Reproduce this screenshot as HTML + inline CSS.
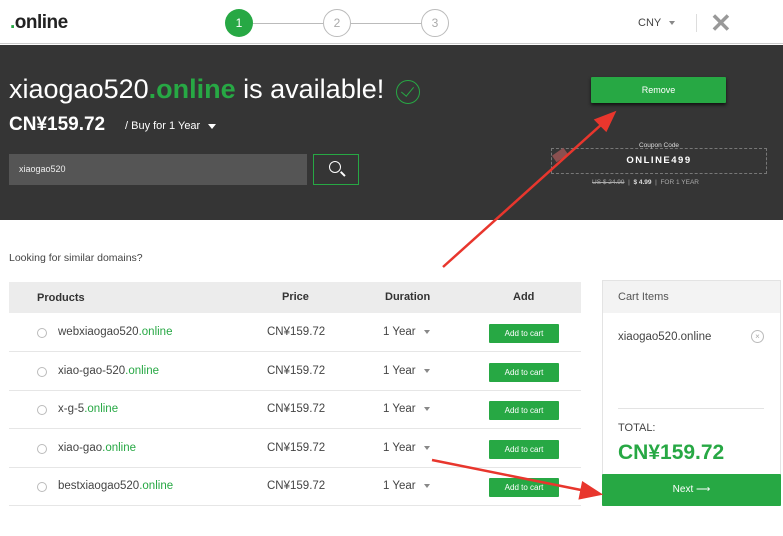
<!DOCTYPE html>
<html><head><meta charset="utf-8"><style>
*{margin:0;padding:0;box-sizing:border-box}
body{width:783px;height:536px;overflow:hidden;background:#fff;font-family:"Liberation Sans",sans-serif;position:relative;color:#333}
.a{position:absolute}
.g{color:#27a844}
.btn{background:#27a844;color:#fff;font-size:8px;text-align:center;border-radius:1px}
.row{position:absolute;left:9px;width:572px;height:38px;border-bottom:1px solid #e6e6e6;font-size:11.5px;color:#444}
.row>span{position:absolute;top:12px;white-space:nowrap}
.rad{position:absolute;left:28px;top:14px;width:10px;height:10px;border:1px solid #bbb;border-radius:50%}
.car{display:inline-block;border-left:3px solid transparent;border-right:3px solid transparent;border-top:4px solid #888;margin-left:8px;vertical-align:middle}
</style></head><body>
<div class="a" style="left:0;top:0;width:783px;height:44px;border-bottom:1px solid #ccc"></div>
<div class="a" style="left:10px;top:12px;font-size:19px;font-weight:bold;color:#222;letter-spacing:-0.5px"><span class="g">.</span>online</div>
<div class="a" style="left:253px;top:23px;width:70px;height:1px;background:#bbb"></div>
<div class="a" style="left:351px;top:23px;width:70px;height:1px;background:#bbb"></div>
<div class="a" style="left:225px;top:9px;width:28px;height:28px;border-radius:50%;background:#27a844;color:#fff;font-size:12px;text-align:center;line-height:28px">1</div>
<div class="a" style="left:323px;top:9px;width:28px;height:28px;border-radius:50%;border:1px solid #bbb;color:#aaa;font-size:12px;text-align:center;line-height:26px">2</div>
<div class="a" style="left:421px;top:9px;width:28px;height:28px;border-radius:50%;border:1px solid #bbb;color:#aaa;font-size:12px;text-align:center;line-height:26px">3</div>
<div class="a" style="left:638px;top:17px;font-size:11px;color:#444">CNY<span class="car"></span></div>
<div class="a" style="left:696px;top:14px;width:1px;height:18px;background:#ddd"></div>
<div class="a" style="left:710px;top:8px;font-size:26px;color:#999;font-weight:bold">✕</div>
<div class="a" style="left:0;top:45px;width:783px;height:175px;background:#353535"></div>
<div class="a" style="left:9px;top:74px;font-size:27px;color:#fff;white-space:nowrap">xiaogao520<span class="g" style="font-weight:bold">.online</span> is available!</div>
<div class="a" style="left:396px;top:80px;width:24px;height:24px;border:1.5px solid #27a844;border-radius:50%"></div>
<div class="a" style="left:404px;top:84px;width:7px;height:12px;border-right:1.5px solid #27a844;border-bottom:1.5px solid #27a844;transform:rotate(40deg)"></div>
<div class="a" style="left:9px;top:114px;font-size:19px;font-weight:bold;color:#fff">CN¥159.72</div>
<div class="a" style="left:125px;top:120px;font-size:11px;color:#fff">/ Buy for 1 Year <span style="display:inline-block;border-left:4px solid transparent;border-right:4px solid transparent;border-top:5px solid #fff;margin-left:5px;vertical-align:middle"></span></div>
<div class="a" style="left:9px;top:154px;width:298px;height:31px;background:#555;color:#eee;font-size:9px;padding:10px 10px">xiaogao520</div>
<div class="a" style="left:313px;top:154px;width:46px;height:31px;border:1.5px solid #27a844"></div>
<div class="a" style="left:329px;top:161px;width:12px;height:12px;border:1.5px solid #fff;border-radius:50%"></div>
<div class="a" style="left:340px;top:173px;width:6px;height:1.5px;background:#fff;transform:rotate(45deg)"></div>
<div class="a btn" style="left:591px;top:77px;width:135px;height:26px;line-height:26px;font-size:9px;box-shadow:0 2px 3px #111">Remove</div>
<div class="a" style="left:551px;top:148px;width:216px;height:26px;border:1px dashed #777"></div>
<div class="a" style="left:551px;top:142px;width:216px;text-align:center;font-size:6.5px;color:#ddd">Coupon Code</div>
<div class="a" style="left:551px;top:155px;width:216px;text-align:center;font-size:9.5px;color:#fff;letter-spacing:1.5px;font-weight:bold">ONLINE499</div>
<div class="a" style="left:553px;top:151px;width:14px;height:8px;background:#8a5050;transform:rotate(-35deg)"></div>
<div class="a" style="left:592px;top:179px;font-size:6.5px;color:#aaa"><s>US $ 24.99</s> &nbsp;|&nbsp; <b style="color:#ddd">$ 4.99</b> &nbsp;|&nbsp; FOR 1 YEAR</div>
<div class="a" style="left:9px;top:252px;font-size:10.5px;color:#444">Looking for similar domains?</div>
<div class="a" style="left:9px;top:282px;width:572px;height:31px;background:#ececec;font-size:11px;font-weight:bold;color:#333">
<span class="a" style="left:28px;top:10px">Products</span><span class="a" style="left:273px;top:9px">Price</span><span class="a" style="left:376px;top:9px">Duration</span><span class="a" style="left:504px;top:9px">Add</span></div>
<div class="row" style="top:314px"><div class="rad"></div><span style="left:49px">webxiaogao520<i class="g" style="font-style:normal">.online</i></span><span style="left:258px">CN¥159.72</span><span style="left:374px">1 Year<i class="car"></i></span><div class="a btn" style="left:480px;top:10px;width:70px;height:19px;line-height:19px">Add to cart</div></div>
<div class="row" style="top:353px"><div class="rad"></div><span style="left:49px">xiao-gao-520<i class="g" style="font-style:normal">.online</i></span><span style="left:258px">CN¥159.72</span><span style="left:374px">1 Year<i class="car"></i></span><div class="a btn" style="left:480px;top:10px;width:70px;height:19px;line-height:19px">Add to cart</div></div>
<div class="row" style="top:391px"><div class="rad"></div><span style="left:49px">x-g-5<i class="g" style="font-style:normal">.online</i></span><span style="left:258px">CN¥159.72</span><span style="left:374px">1 Year<i class="car"></i></span><div class="a btn" style="left:480px;top:10px;width:70px;height:19px;line-height:19px">Add to cart</div></div>
<div class="row" style="top:430px"><div class="rad"></div><span style="left:49px">xiao-gao<i class="g" style="font-style:normal">.online</i></span><span style="left:258px">CN¥159.72</span><span style="left:374px">1 Year<i class="car"></i></span><div class="a btn" style="left:480px;top:10px;width:70px;height:19px;line-height:19px">Add to cart</div></div>
<div class="row" style="top:468px"><div class="rad"></div><span style="left:49px">bestxiaogao520<i class="g" style="font-style:normal">.online</i></span><span style="left:258px">CN¥159.72</span><span style="left:374px">1 Year<i class="car"></i></span><div class="a btn" style="left:480px;top:10px;width:70px;height:19px;line-height:19px">Add to cart</div></div>
<div class="a" style="left:602px;top:280px;width:179px;height:226px;border:1px solid #e3e3e3"></div>
<div class="a" style="left:603px;top:281px;width:177px;height:32px;background:#f3f3f3"></div>
<div class="a" style="left:618px;top:291px;font-size:11px;color:#555">Cart Items</div>
<div class="a" style="left:618px;top:331px;font-size:11.5px;color:#444">xiaogao520.online</div>
<div class="a" style="left:751px;top:330px;width:13px;height:13px;border:1px solid #bbb;border-radius:50%;font-size:8px;color:#aaa;text-align:center;line-height:11px">×</div>
<div class="a" style="left:618px;top:408px;width:146px;height:1px;background:#e3e3e3"></div>
<div class="a" style="left:618px;top:422px;font-size:11px;color:#444">TOTAL:</div>
<div class="a g" style="left:618px;top:441px;font-size:21px;font-weight:bold">CN¥159.72</div>
<div class="a btn" style="left:602px;top:474px;width:179px;height:32px;line-height:32px;font-size:10px">Next ⟶</div>
<svg class="a" style="left:0;top:0" width="783" height="536"><g stroke="#e8362d" stroke-width="2.5" fill="#e8362d">
<line x1="443" y1="267" x2="602" y2="124"/><polygon points="614,113 596,120 606,130"/>
<line x1="432" y1="460" x2="586" y2="491"/><polygon points="600,494 583,483 580,498"/></g></svg>
</body></html>
